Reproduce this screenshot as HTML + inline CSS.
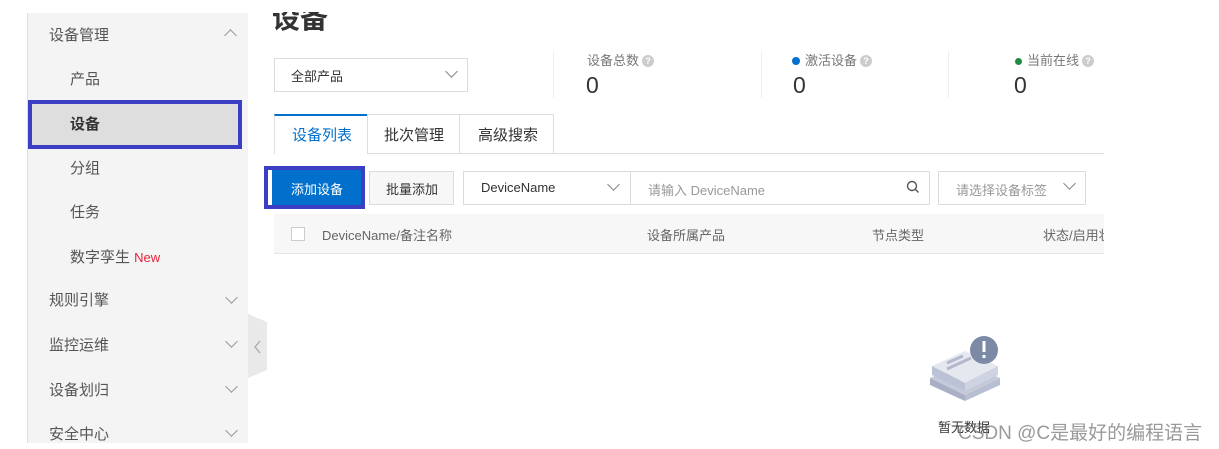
<!DOCTYPE html>
<html><head><meta charset="utf-8"><style>
*{margin:0;padding:0;box-sizing:border-box}
body{width:1219px;height:449px;background:#fff;position:relative;overflow:hidden;font-family:"Liberation Sans","Noto Sans CJK SC",sans-serif;color:#333;font-size:14px}
.a{position:absolute;white-space:nowrap}
.sb{position:absolute;left:27px;top:13px;width:221px;height:430px;background:#f4f4f4;border-left:1px solid #ddd}
.chev{position:absolute;width:9px;height:9px;border-right:1.3px solid #999;border-bottom:1.3px solid #999}
.g{color:#555}
.q{display:inline-block;width:12px;height:12px;border-radius:50%;background:#ccc;color:#fff;font-size:9px;text-align:center;line-height:12px;vertical-align:1px;margin-left:3px;font-weight:bold}
.box{position:absolute;border:1px solid #dcdcdc;background:#fff}
</style></head><body>
<div class="sb"></div>
<div class="a g" style="left:49px;top:24px;font-size:15px">设备管理</div>
<div class="chev" style="left:226px;top:31px;transform:rotate(-135deg)"></div>
<div class="a g" style="left:70px;top:68px;font-size:15px">产品</div>
<div class="a" style="left:28px;top:100px;width:214px;height:49px;border:4px solid #3c3fc3;background:#dedede"></div>
<div class="a" style="left:70px;top:113px;font-size:15px;font-weight:bold;color:#333">设备</div>
<div class="a g" style="left:70px;top:157px;font-size:15px">分组</div>
<div class="a g" style="left:70px;top:201px;font-size:15px">任务</div>
<div class="a g" style="left:70px;top:246px;font-size:15px">数字孪生 <span style="color:#e8233d;font-size:13px">New</span></div>
<div class="a g" style="left:49px;top:289px;font-size:15px">规则引擎</div>
<div class="a g" style="left:49px;top:334px;font-size:15px">监控运维</div>
<div class="a g" style="left:49px;top:379px;font-size:15px">设备划归</div>
<div class="a g" style="left:49px;top:423px;font-size:15px">安全中心</div>
<div class="chev" style="left:227px;top:293px;transform:rotate(45deg)"></div>
<div class="chev" style="left:227px;top:337px;transform:rotate(45deg)"></div>
<div class="chev" style="left:227px;top:382px;transform:rotate(45deg)"></div>
<div class="chev" style="left:227px;top:426px;transform:rotate(45deg)"></div>
<svg class="a" style="left:248px;top:314px" width="20" height="64"><path d="M0 0 L19 8 L19 56 L0 64Z" fill="#e9e9e9"/><path d="M12 27 L7 33 L12 39" stroke="#aaa" fill="none" stroke-width="1.3"/></svg>

<div class="a" style="left:272px;top:-3px;font-size:28px;font-weight:bold;color:#333">设备</div>
<div class="a" style="left:250px;top:0;width:300px;height:12px;background:#fff"></div>

<div class="box" style="left:274px;top:58px;width:194px;height:34px"></div>
<div class="a" style="left:291px;top:66px;font-size:13px">全部产品</div>
<div class="chev" style="left:447px;top:67px;transform:rotate(45deg);border-color:#888"></div>
<div class="a" style="left:553px;top:51px;width:1px;height:47px;background:#eee"></div>
<div class="a" style="left:761px;top:51px;width:1px;height:47px;background:#eee"></div>
<div class="a" style="left:948px;top:51px;width:1px;height:47px;background:#eee"></div>
<div class="a" style="left:587px;top:50px;font-size:13px;color:#777">设备总数<span class="q">?</span></div>
<div class="a" style="left:792px;top:50px;font-size:13px;color:#777"><span style="display:inline-block;width:8px;height:8px;border-radius:50%;background:#0070cc;margin-right:5px"></span>激活设备<span class="q">?</span></div>
<div class="a" style="left:1015px;top:50px;font-size:13px;color:#777"><span style="display:inline-block;width:7px;height:7px;border-radius:50%;background:#1e8e3e;margin-right:5px"></span>当前在线<span class="q">?</span></div>
<div class="a" style="left:586px;top:72px;font-size:23px;color:#333">0</div>
<div class="a" style="left:793px;top:72px;font-size:23px;color:#333">0</div>
<div class="a" style="left:1014px;top:72px;font-size:23px;color:#333">0</div>

<div class="a" style="left:274px;top:153px;width:830px;height:1px;background:#ddd"></div>
<div class="a" style="left:274px;top:114px;width:94px;height:40px;background:#fff;border-top:2px solid #0070cc;border-left:1px solid #ddd"></div>
<div class="a" style="left:292px;top:124px;font-size:15px;color:#0070cc">设备列表</div>
<div class="a" style="left:367px;top:114px;width:93px;height:40px;border:1px solid #ddd;border-bottom:none"></div>
<div class="a" style="left:384px;top:124px;font-size:15px">批次管理</div>
<div class="a" style="left:459px;top:114px;width:95px;height:40px;border:1px solid #ddd;border-bottom:none"></div>
<div class="a" style="left:478px;top:124px;font-size:15px">高级搜索</div>

<div class="a" style="left:264px;top:166px;width:101px;height:43px;border:4px solid #3c3fc3;background:#0070cc"></div>
<div class="a" style="left:268px;top:170px;width:4px;height:35px;background:#fff"></div>
<div class="a" style="left:291px;top:179px;font-size:13px;color:#fff">添加设备</div>
<div class="box" style="left:369px;top:171px;width:85px;height:34px;background:#f7f7f7"></div>
<div class="a" style="left:386px;top:179px;font-size:13px">批量添加</div>
<div class="box" style="left:463px;top:171px;width:168px;height:34px"></div>
<div class="a" style="left:481px;top:180px;font-size:13px">DeviceName</div>
<div class="chev" style="left:609px;top:180px;transform:rotate(45deg);border-color:#888"></div>
<div class="box" style="left:630px;top:171px;width:300px;height:34px"></div>
<div class="a" style="left:648px;top:180px;font-size:13px;color:#999">请输入 DeviceName</div>
<svg class="a" style="left:906px;top:180px" width="14" height="14"><circle cx="6" cy="6" r="4.5" stroke="#555" stroke-width="1.4" fill="none"/><path d="M9.5 9.5 L12.5 12.5" stroke="#555" stroke-width="1.4"/></svg>
<div class="box" style="left:938px;top:171px;width:148px;height:34px"></div>
<div class="a" style="left:956px;top:180px;font-size:13px;color:#999">请选择设备标签</div>
<div class="chev" style="left:1065px;top:179px;transform:rotate(45deg);border-color:#888"></div>

<div class="a" style="left:274px;top:214px;width:830px;height:40px;background:#f7f7f7;border-bottom:1px solid #e5e5e5"></div>
<div class="a" style="left:291px;top:227px;width:14px;height:14px;border:1px solid #ccc;background:#fff"></div>
<div class="a" style="left:322px;top:225px;font-size:13px;color:#666">DeviceName/备注名称</div>
<div class="a" style="left:647px;top:225px;font-size:13px;color:#666">设备所属产品</div>
<div class="a" style="left:872px;top:225px;font-size:13px;color:#666">节点类型</div>
<div class="a" style="left:1043px;top:225px;width:61px;overflow:hidden;font-size:13px;color:#666">状态/启用状态</div>

<svg class="a" style="left:925px;top:333px" width="80" height="70">
<path d="M5 45 L40 30 L75 45 L40 62Z" fill="#c5cadb"/><path d="M5 45 L5 52 L40 68 L40 62Z" fill="#a9b0c6"/><path d="M75 45 L75 52 L40 68 L40 62Z" fill="#b9bfd2"/>
<path d="M7 33 L40 18 L73 33 L40 50Z" fill="#e6e8f0"/><path d="M7 33 L7 42 L40 58 L40 50Z" fill="#bcc2d5"/><path d="M73 33 L73 42 L40 58 L40 50Z" fill="#cfd3e1"/>
<path d="M22 30 L38 23 M22 36 L46 25" stroke="#b3b9cc" stroke-width="3"/>
<circle cx="59" cy="17" r="14" fill="#7d8aa6"/><rect x="57.5" y="8" width="3" height="11" fill="#fff"/><rect x="57.5" y="22" width="3" height="3" fill="#fff"/>
</svg>
<div class="a" style="left:938px;top:417px;font-size:13px;color:#333">暂无数据</div>
<div class="a" style="left:958px;top:418px;font-size:19px;color:rgba(120,120,120,0.75)">CSDN @C是最好的编程语言</div>
</body></html>
